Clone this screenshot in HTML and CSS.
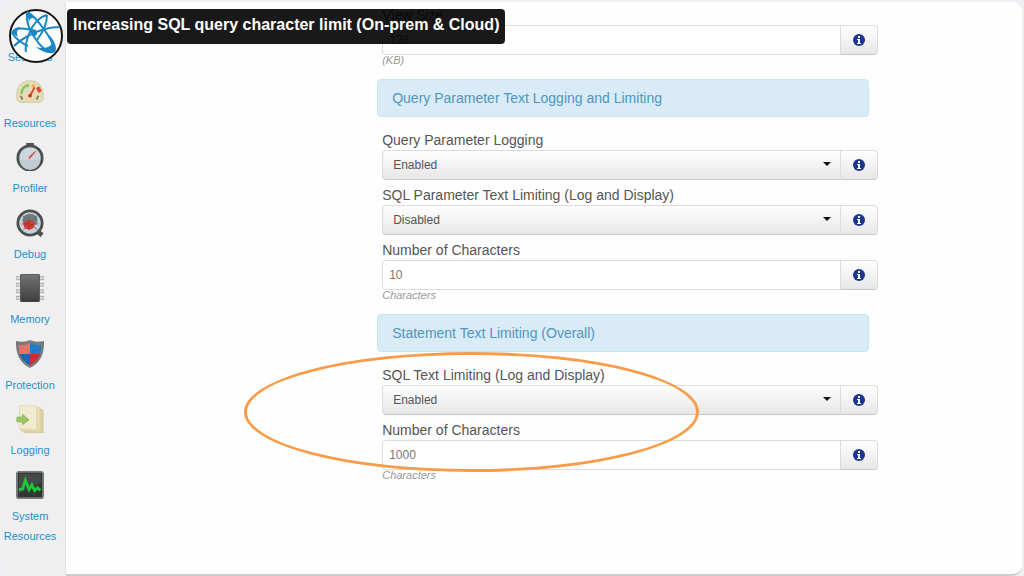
FILE: index.html
```html
<!DOCTYPE html>
<html lang="en">
<head>
  <meta charset="UTF-8" />
  <meta name="viewport" content="width=device-width, initial-scale=1.0" />
  <title>Increasing SQL query character limit</title>
  <link rel="stylesheet" href="styles.css">
</head>
<body>
  <svg class="defs" aria-hidden="true">
    <symbol id="info" viewBox="0 0 12 12">
      <circle cx="6" cy="6" r="6" fill="#1c3590" />
      <path d="M5 2h2v2H5zM4 5h3v4h1v1H4V9h1V6H4z" fill="#fff" />
    </symbol>
  </svg>

  <div class="frame">
    <nav class="sidebar">
      <a href="#">
        <svg viewBox="0 0 30 30">
          <path d="M7 0h15v6l-3 5h-9L7 6z" fill="#e9d9a8" stroke="#c9b987" />
          <path d="M4 30c0-12 4-17 11-17s11 5 11 17z" fill="#e6dcb9" />
        </svg>
        Sessions
      </a>
      <a href="#">
        <svg viewBox="0 0 30 30">
          <path d="M1 21C0 9 6 3 15 3s15 6 14 18c0 4-2 5-4 5H5c-2 0-4-1-4-5z" fill="#e5dcb8" stroke="#d0c69d" />
          <path d="M6 17c0-5 3-9 8-9" fill="none" stroke="#8bc46c" stroke-width="3" />
          <path d="M17 8l3 1" stroke="#e8b23c" stroke-width="3" />
          <path d="M23 10l3 5" stroke="#df4a3c" stroke-width="4" />
          <path d="M15 19l5-9" stroke="#e04432" stroke-width="2" />
          <path d="M5 19l2 4M24 19l-2 4" stroke="#85806c" stroke-width="2" />
          <circle cx="15" cy="19" r="2" fill="#c93a2b" />
        </svg>
        Resources
      </a>
      <a href="#">
        <svg viewBox="0 0 30 30">
          <path d="M11 0h8v4h-8z" fill="#4c4f50" />
          <circle cx="15" cy="16" r="13" fill="#ccd6dc" stroke="#4c4f50" stroke-width="3" />
          <path d="M4 18a11 11 0 0 0 22 0z" fill="#c1ccd2" />
          <path d="M14 17l1-3 6-5-5 6z" fill="#e34b32" stroke="#d9482f" />
        </svg>
        Profiler
      </a>
      <a href="#">
        <svg viewBox="0 0 30 30">
          <path d="M23 24l5 4" stroke="#4d5051" stroke-width="5" />
          <circle cx="15" cy="15" r="13" fill="#c5d1d8" stroke="#4d5051" stroke-width="3" />
          <ellipse cx="15" cy="12" rx="8" ry="7" fill="#6d777c" />
          <path d="M7 7l4 4M23 7l-4 4M6 16h4M24 16h-4M8 22l4-3M23 22l-4-3" stroke="#626c71" />
          <ellipse cx="14" cy="17" rx="6" ry="5" fill="#d73a32" />
          <path d="M14 12v10" stroke="#8c302d" />
          <circle cx="11" cy="16" r="1" fill="#7a2d29" />
          <circle cx="17" cy="17" r="1" fill="#7a2d29" />
        </svg>
        Debug
      </a>
      <a href="#">
        <svg viewBox="0 0 30 30">
          <defs>
            <linearGradient id="chip" x2="0" y2="1">
              <stop stop-color="#767676" />
              <stop offset="1" stop-color="#3c3c3c" />
            </linearGradient>
          </defs>
          <path d="M0 3h5v3H0zM0 10h5v3H0zM0 17h5v3H0zM0 24h5v3H0zM25 3h5v3h-5zM25 10h5v3h-5zM25 17h5v3h-5zM25 24h5v3h-5z" fill="#e0e0e0" stroke="#a4a4a4" />
          <rect x="5" y="0" width="20" height="30" rx="1" fill="url(#chip)" stroke="#4b4b4b" />
        </svg>
        Memory
      </a>
      <a href="#">
        <svg viewBox="0 0 30 30">
          <path d="M0 1q9 2 15-1 6 3 15 1 1 21-15 29Q-1 22 0 1z" fill="#787b7d" />
          <path d="M3 6q7 0 12-3v12H4Q3 10 3 6z" fill="#ed706a" />
          <path d="M15 3q5 3 12 3 0 4-1 9H15z" fill="#207dca" />
          <path d="M4 15h11v12Q6 22 4 15z" fill="#1b64b3" />
          <path d="M15 15h11q-2 7-11 12z" fill="#cd2e28" />
        </svg>
        Protection
      </a>
      <a href="#">
        <svg viewBox="0 0 30 30">
          <path d="M9 5h20v25H9z" fill="#ded0a2" stroke="#d3c799" />
          <path d="M6 3h20v25H6z" fill="#e7dcb3" stroke="#d9cea3" />
          <path d="M4 1h18v25H4z" fill="#f1ebcf" stroke="#e0d7ae" />
          <path d="M1 13h6v-3l7 6-7 5v-3H1z" fill="#9bc665" stroke="#8ab95b" />
        </svg>
        Logging
      </a>
      <a href="#">
        <svg viewBox="0 0 30 30">
          <rect x="1" y="1" width="28" height="28" rx="2" fill="#303634" stroke="#777b7b" stroke-width="2" />
          <path d="M3 3h24v9L3 24z" fill="#fff" opacity=".1" />
          <path d="M3 20l4-1 3-9 4 10 3-5 3 6 3-3 3 3" fill="none" stroke="#19cb35" stroke-width="3" />
        </svg>
        System Resources
      </a>
    </nav>

    <main class="content">
      <form class="settings">
        <div class="field">
          <label for="view-size">View Size</label>
          <div class="control">
            <input type="text" id="view-size" value="128">
            <button type="button" aria-label="About View Size"><svg><use href="#info" /></svg></button>
          </div>
          <p class="help">(KB)</p>
        </div>

        <h2>Query Parameter Text Logging and Limiting</h2>
        <div class="field">
          <label for="param-logging">Query Parameter Logging</label>
          <div class="control">
            <div class="select">
              <select id="param-logging"><option selected>Enabled</option><option>Disabled</option></select>
            </div>
            <button type="button" aria-label="About Query Parameter Logging"><svg><use href="#info" /></svg></button>
          </div>
        </div>
        <div class="field">
          <label for="param-limiting">SQL Parameter Text Limiting (Log and Display)</label>
          <div class="control">
            <div class="select">
              <select id="param-limiting"><option>Enabled</option><option selected>Disabled</option></select>
            </div>
            <button type="button" aria-label="About SQL Parameter Text Limiting"><svg><use href="#info" /></svg></button>
          </div>
        </div>
        <div class="field">
          <label for="param-chars">Number of Characters</label>
          <div class="control">
            <input type="text" id="param-chars" value="10">
            <button type="button" aria-label="About Number of Characters"><svg><use href="#info" /></svg></button>
          </div>
          <p class="help">Characters</p>
        </div>

        <h2>Statement Text Limiting (Overall)</h2>
        <section class="highlighted">
          <div class="field">
            <label for="sql-limiting">SQL Text Limiting (Log and Display)</label>
            <div class="control">
              <div class="select">
                <select id="sql-limiting"><option selected>Enabled</option><option>Disabled</option></select>
              </div>
              <button type="button" aria-label="About SQL Text Limiting"><svg><use href="#info" /></svg></button>
            </div>
          </div>
          <div class="field">
            <label for="sql-chars">Number of Characters</label>
            <div class="control">
              <input type="text" id="sql-chars" value="1000">
              <button type="button" aria-label="About Number of Characters"><svg><use href="#info" /></svg></button>
            </div>
            <p class="help">Characters</p>
          </div>
          <div class="ring"></div>
        </section>
      </form>
    </main>
  </div>

  <header class="overlay">
    <svg class="logo" viewBox="0 0 54 54">
      <circle cx="27" cy="27" r="26" fill="#fff" stroke="#161616" stroke-width="2" />
      <g fill="none" stroke="#1b87c4" stroke-width="2">
        <path d="M18 3c-1 8 2 18 8 26 5 8 12 14 18 14M18 3c6 3 11 9 16 16 6 8 12 18 10 24" />
        <path d="M38 6c-8 2-15 10-18 19-3 8-4 14-3 18M38 6c0 8-4 17-10 25" />
        <path d="M51 18c-10 0-23 4-32 9-6 3-11 7-14 10" />
        <path d="M3 24c4 6 9 10 16 13M3 24c3-6 14-5 24-2" />
      </g>
      <path d="M27 38c6 2 12 1 15-2 1-4-1-8-4-12 7 6 11 15 8 19-4 3-13 0-19-5zM3 24c1-4 4-6 9-6-4 2-5 5-3 10zM18 3c3 0 6 3 9 7-4-2-6-1-7 3z" fill="#1b87c4" />
      <circle cx="25" cy="24" r="3" fill="#1b87c4" />
    </svg>
    <h1>Increasing SQL query character limit (On-prem &amp; Cloud)</h1>
  </header>
</body>
</html>
```
FILE: styles.css
```css
* { box-sizing: border-box; }
body {
  margin: 0;
  background-color: #edf1f6;
  color: #555;
  font-family: "Liberation Sans", Arial, sans-serif;
}
.defs { position: absolute; width: 0; height: 0; }

.frame {
  display: flex;
  min-height: 100vh;
  padding: 2px 2px 0;
}

/* sidebar */
.sidebar {
  display: flex;
  flex-direction: column;
  justify-content: space-between;
  flex: 0 0 64px;
  padding: 10px 7px 30px 0;
  background-color: #efefef;
  border-right: 1px solid #e4e4e4;
  border-radius: 12px 0 0 12px;
}
.sidebar a {
  display: flex;
  flex-direction: column;
  align-items: center;
  gap: 7px;
  color: #1f8fd0;
  font-size: 11px;
  line-height: 20px;
  text-align: center;
  text-decoration: none;
}
.sidebar svg { width: 28px; height: 28px; }

/* settings form */
.content {
  display: grid;
  grid-template-columns: minmax(0, 496px);
  flex: 1;
  padding: 3px 0 0 31%;
  background-color: #fefefe;
  border-bottom: 2px solid #ccc;
  border-radius: 0 10px 10px 0;
}
.settings h2 {
  margin: 13px 9px 13px -5px;
  padding: 8px 14px;
  background-color: #d9ebf6;
  border: 1px solid #c5e8f3;
  border-radius: 4px;
  color: #5096c0;
  font-size: 14px;
  font-weight: normal;
  line-height: 20px;
}
.field + .field { margin-top: 5px; }
.field label {
  display: block;
  font-size: 14px;
  line-height: 20px;
}
.control {
  display: flex;
  height: 30px;
}
.control input,
.control select {
  width: 100%;
  height: 30px;
  margin: 0;
  border: 1px solid #dcdcdc;
  border-radius: 4px 0 0 4px;
  color: #555;
  font-family: inherit;
  font-size: 12px;
}
.control input {
  flex: 1;
  min-width: 0;
  padding: 0 6px;
  background-color: #fff;
  color: #777;
}
.select {
  position: relative;
  flex: 1;
}
.control select {
  appearance: none;
  padding: 0 28px 0 10px;
  background: linear-gradient(#fefefe, #e7e7e7);
  border-bottom-color: #c8c8c8;
}
.select::after {
  content: "";
  position: absolute;
  top: 12px;
  right: 10px;
  border: 4px solid transparent;
  border-top-color: #111;
  border-bottom: 0;
  pointer-events: none;
}
.control button {
  display: flex;
  align-items: center;
  justify-content: center;
  width: 38px;
  margin-left: -1px;
  padding: 0;
  background: linear-gradient(#fefefe, #e7e7e7);
  border: 1px solid #dcdcdc;
  border-bottom-color: #c8c8c8;
  border-radius: 0 4px 4px 0;
}
.control button svg { width: 12px; height: 12px; }
.help {
  margin: 0;
  color: #999;
  font-size: 11px;
  font-style: italic;
  line-height: 11px;
}

.highlighted { position: relative; }
.ring {
  position: absolute;
  top: -13px;
  left: -138px;
  width: 455px;
  height: 120px;
  border: 3px solid #f99b48;
  border-radius: 50%;
  pointer-events: none;
}

/* video title */
.overlay {
  position: absolute;
  top: 9px;
  left: 9px;
  display: flex;
  align-items: flex-start;
  gap: 4px;
}
.logo { width: 54px; height: 54px; }
.overlay h1 {
  margin: 0;
  padding: 0 6px 3px;
  background-color: rgba(0, 0, 0, 0.9);
  border-radius: 4px;
  color: #fff;
  font-size: 16px;
  line-height: 32px;
  white-space: nowrap;
}
```
